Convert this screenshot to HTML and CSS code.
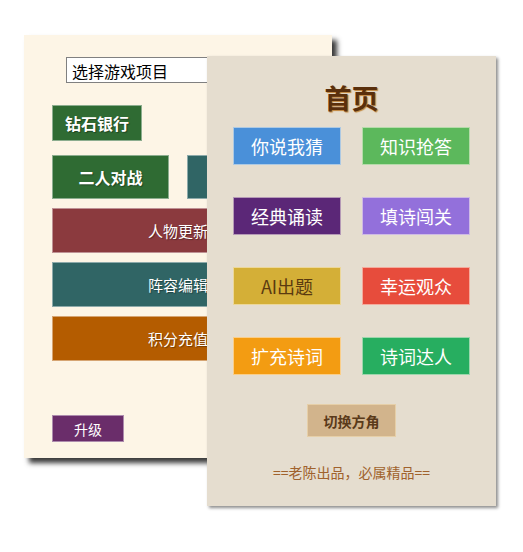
FILE: index.html
```html
<!DOCTYPE html>
<html lang="zh">
<head>
<meta charset="utf-8">
<title>首页</title>
<link rel="stylesheet" href="styles.css">
</head>
<body>
<div class="stage">
  <section class="panel back">
    <select class="game-select">
      <option>选择游戏项目</option>
    </select>
    <button class="btn btn-bank">钻石银行</button>
    <div class="duo-row">
      <button class="btn btn-duo">二人对战</button>
      <button class="btn btn-duo btn-teal">团队对战</button>
    </div>
    <button class="btn btn-wide btn-maroon">人物更新</button>
    <button class="btn btn-wide btn-teal">阵容编辑</button>
    <button class="btn btn-wide btn-rust">积分充值</button>
    <button class="btn btn-upgrade">升级</button>
  </section>

  <section class="panel front">
    <h1 class="title">首页</h1>
    <div class="grid">
      <button class="tile c-blue">你说我猜</button>
      <button class="tile c-green">知识抢答</button>
      <button class="tile c-plum">经典诵读</button>
      <button class="tile c-lilac">填诗闯关</button>
      <button class="tile c-gold">AI出题</button>
      <button class="tile c-red">幸运观众</button>
      <button class="tile c-orange">扩充诗词</button>
      <button class="tile c-emerald">诗词达人</button>
    </div>
    <button class="switch">切换方角</button>
    <p class="footer">==老陈出品，必属精品==</p>
  </section>
</div>
</body>
</html>
```

FILE: styles.css
```css
* { box-sizing: border-box; }

html, body {
  margin: 0;
  padding: 0;
  background: #ffffff;
  font-family: "Noto Sans CJK SC", "Noto Sans", sans-serif;
}

.stage {
  position: relative;
  width: 523px;
  height: 552px;
  padding: 35px 0 0 24px;
}

.panel {
  display: flex;
  flex-direction: column;
}

.back {
  width: 308px;
  height: 423px;
  background: #fdf5e6;
  padding: 22px 28px 0 28px;
  box-shadow: 5px 5px 5px #3a3a3a;
  align-items: flex-start;
}

.game-select {
  width: 224px;
  height: 26px;
  margin: 0 0 22px 14px;
  font-family: "Noto Sans CJK SC", sans-serif;
  font-size: 16px;
  color: #000;
  background: #fff;
  border: 1px solid #808080;
  border-radius: 0;
  padding: 0 1px;
}

.btn {
  border: 1px solid rgba(255, 255, 255, 0.45);
  color: #fff;
  font-family: "Noto Sans CJK SC", sans-serif;
  padding: 0;
  margin: 0;
  cursor: pointer;
  text-shadow: 1px 1px 1px rgba(0, 0, 0, 0.35);
}

.btn-bank {
  width: 90px;
  height: 36px;
  background: #2f6b33;
  font-size: 16px;
  font-weight: bold;
  margin-bottom: 14px;
}

.duo-row {
  display: flex;
  gap: 18px;
  width: 252px;
  margin-bottom: 9px;
}

.btn-duo {
  width: 117px;
  height: 44px;
  background: #2f6b33;
  font-size: 16px;
  font-weight: bold;
}

.btn-wide {
  width: 252px;
  height: 45px;
  font-size: 15px;
  margin-bottom: 9px;
}

.btn-teal { background: #306565; }
.btn-maroon { background: #8b3a3e; }
.btn-rust { background: #b45c00; }

.btn-upgrade {
  width: 72px;
  height: 27px;
  background: #6a2d6a;
  font-size: 14px;
  margin-top: 45px;
  text-shadow: none;
}

.front {
  position: absolute;
  left: 207px;
  top: 56px;
  width: 289px;
  height: 450px;
  background: #e5ddcf;
  box-shadow: 2px 2px 3px #8c8c8c;
  padding: 25px 26px 0 26px;
  align-items: center;
}

.title {
  margin: 0 0 12px 0;
  height: 34px;
  line-height: 34px;
  font-size: 27px;
  font-weight: bold;
  color: #5a2f0c;
  text-shadow: 1px 1px 1px #c0843a;
}

.grid {
  display: grid;
  grid-template-columns: 108px 108px;
  grid-auto-rows: 38px;
  column-gap: 21px;
  row-gap: 32px;
}

.tile {
  border: 1px solid rgba(255, 248, 235, 0.55);
  color: #fff;
  font-family: "Noto Sans CJK SC", sans-serif;
  font-size: 18px;
  padding: 0;
  margin: 0;
}

.c-blue { background: #4a90d9; }
.c-green { background: #5cb85c; }
.c-plum { background: #5b2777; }
.c-lilac { background: #9370db; }
.c-gold { background: #d4af37; color: #5a3a10; }
.c-red { background: #e74c3c; }
.c-orange { background: #f39c12; }
.c-emerald { background: #27ae60; }

.switch {
  margin-top: 29px;
  width: 89px;
  height: 33px;
  background: #d2b48c;
  border: 1px solid #e6cfa8;
  color: #5a3a1a;
  font-family: "Noto Sans CJK SC", sans-serif;
  font-size: 14px;
  font-weight: bold;
  padding: 0;
}

.footer {
  margin: 25px 0 0 0;
  height: 20px;
  line-height: 20px;
  font-size: 14px;
  color: #a0622d;
}
```
